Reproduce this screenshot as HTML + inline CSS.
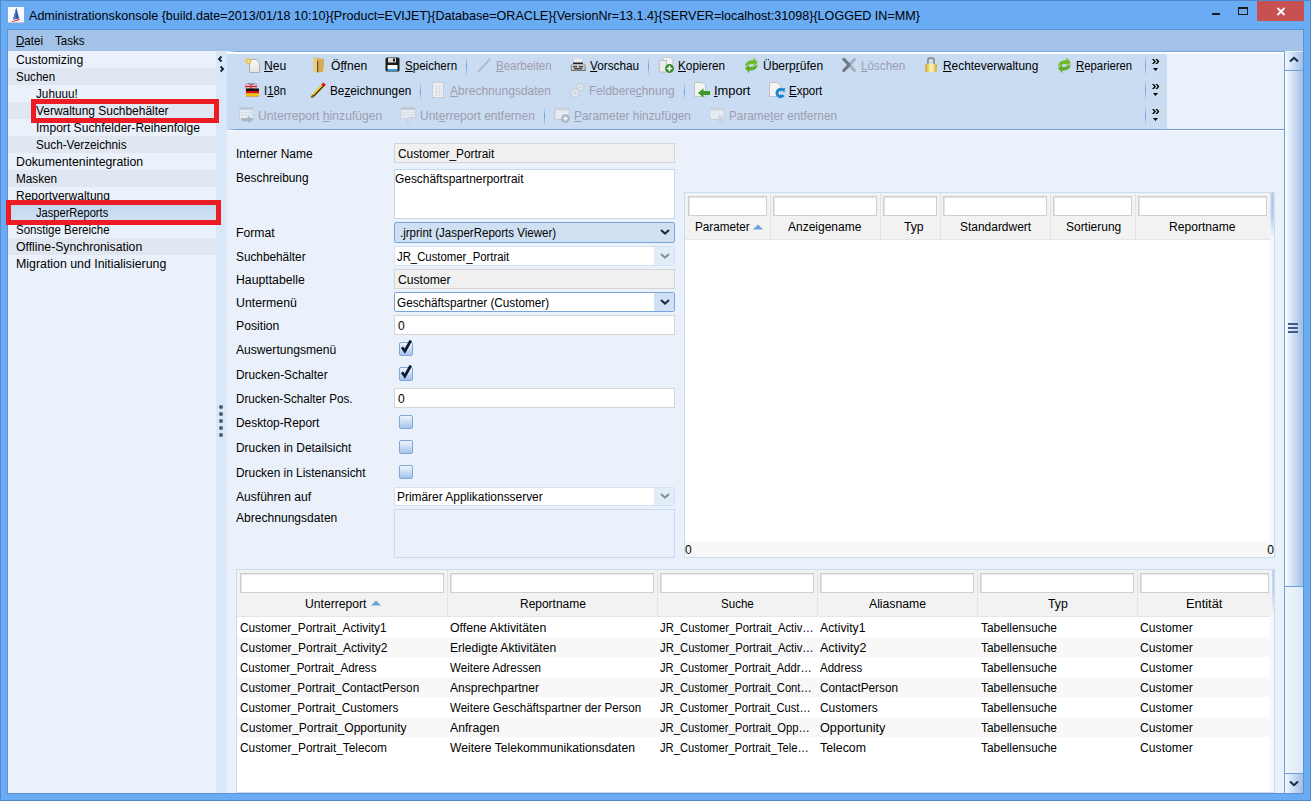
<!DOCTYPE html>
<html><head><meta charset="utf-8">
<style>
*{box-sizing:border-box;margin:0;padding:0}
html,body{width:1311px;height:801px;overflow:hidden}
body{position:relative;background:#6aacf4;font-family:"Liberation Sans",sans-serif;font-size:12px;color:#000}
.a{position:absolute}
.t{position:absolute;white-space:nowrap;line-height:14px}
.d{color:#a09cb0}
.u{text-decoration:underline;text-underline-offset:1px;text-decoration-thickness:1px}
svg{position:absolute;overflow:visible}
</style></head><body>
<div class="a" style="left:0px;top:0px;width:1311px;height:801px;border:1px solid #5189cc"></div>
<svg style="left:8px;top:7px" width="16" height="16" viewBox="0 0 16 16">
<rect x="0" y="0" width="16" height="16" fill="#fafafa"/><rect x="0" y="15" width="16" height="1" fill="#c8c8c8"/>
<path d="M8.3 0.5 L11.2 11.5 L5 12.5 Z" fill="#2f58a8"/><path d="M8.3 0.5 L7.3 12.3 L5 12.5 Z" fill="#5a86d0"/><path d="M3.5 14.5 L12.2 11.6 L11.2 13.3 L4.2 15 Z" fill="#d8283e"/></svg>
<div class="t" style="left:29px;top:8px;font-size:12.57px;line-height:16px">Administrationskonsole {build.date=2013/01/18 10:10}{Product=EVIJET}{Database=ORACLE}{VersionNr=13.1.4}{SERVER=localhost:31098}{LOGGED IN=MM}</div>
<div class="a" style="left:1212px;top:13px;width:8px;height:2px;background:#1c1c1c"></div>
<div class="a" style="left:1238px;top:7px;width:10px;height:8px;border:1px solid #1c1c1c;border-top-width:2px"></div>
<div class="a" style="left:1257px;top:1px;width:47px;height:20px;background:#c75050"></div>
<svg style="left:1276px;top:7px" width="10" height="9" viewBox="0 0 10 9"><path d="M1.5 1 L8.5 8 M8.5 1 L1.5 8" stroke="#fff" stroke-width="1.8"/></svg>
<div class="a" style="left:7px;top:29px;width:1297px;height:765px;background:#5a92d4"></div>
<div class="a" style="left:8px;top:30px;width:1295px;height:21px;background:#a2c3e7"></div>
<div class="t" style="left:16px;top:34px;transform:scaleX(0.9616);transform-origin:0 0;"><span class="u">D</span>atei</div>
<div class="t" style="left:55px;top:34px;transform:scaleX(0.9597);transform-origin:0 0;">Tasks</div>
<div class="a" style="left:8px;top:51px;width:208px;height:742px;background:#eaf1fa"></div>
<div class="t" style="left:16px;top:53px;transform:scaleX(1.0180);transform-origin:0 0;">Customizing</div>
<div class="a" style="left:8px;top:68px;width:208px;height:17px;background:#e0e7f0"></div>
<div class="t" style="left:16px;top:70px;transform:scaleX(0.9619);transform-origin:0 0;">Suchen</div>
<div class="t" style="left:36px;top:87px;transform:scaleX(0.9782);transform-origin:0 0;">Juhuuu!</div>
<div class="a" style="left:8px;top:102px;width:208px;height:17px;background:#e0e7f0"></div>
<div class="t" style="left:36px;top:104px;transform:scaleX(0.9937);transform-origin:0 0;">Verwaltung Suchbehälter</div>
<div class="t" style="left:36px;top:121px;transform:scaleX(1.0070);transform-origin:0 0;">Import Suchfelder-Reihenfolge</div>
<div class="a" style="left:8px;top:136px;width:208px;height:17px;background:#e0e7f0"></div>
<div class="t" style="left:36px;top:138px;transform:scaleX(0.9768);transform-origin:0 0;">Such-Verzeichnis</div>
<div class="t" style="left:16px;top:155px;transform:scaleX(1.0246);transform-origin:0 0;">Dokumentenintegration</div>
<div class="a" style="left:8px;top:170px;width:208px;height:17px;background:#e0e7f0"></div>
<div class="t" style="left:16px;top:172px;transform:scaleX(0.9796);transform-origin:0 0;">Masken</div>
<div class="t" style="left:16px;top:189px;transform:scaleX(0.9983);transform-origin:0 0;">Reportverwaltung</div>
<div class="a" style="left:8px;top:204px;width:208px;height:17px;background:linear-gradient(#c3d7ee,#cfe0f3)"></div>
<div class="t" style="left:36px;top:206px;transform:scaleX(0.9252);transform-origin:0 0;">JasperReports</div>
<div class="t" style="left:16px;top:223px;transform:scaleX(0.9604);transform-origin:0 0;">Sonstige Bereiche</div>
<div class="a" style="left:8px;top:238px;width:208px;height:17px;background:#e0e7f0"></div>
<div class="t" style="left:16px;top:240px;transform:scaleX(1.0192);transform-origin:0 0;">Offline-Synchronisation</div>
<div class="t" style="left:16px;top:257px;transform:scaleX(1.0290);transform-origin:0 0;">Migration und Initialisierung</div>
<div class="a" style="left:216px;top:51px;width:11px;height:742px;background:#d9e7f7"></div>
<svg style="left:216px;top:51px" width="11" height="30" viewBox="0 0 11 30"><path d="M5.5 5.5 L3 8 L5.5 10.5 M4.6 15.5 L7.1 18 L4.6 20.5" stroke="#10203a" stroke-width="1.8" fill="none"/></svg>
<div class="a" style="left:219px;top:405px;width:4px;height:4px;border-radius:2px;background:#4b5a70"></div>
<div class="a" style="left:219px;top:412px;width:4px;height:4px;border-radius:2px;background:#4b5a70"></div>
<div class="a" style="left:219px;top:419px;width:4px;height:4px;border-radius:2px;background:#4b5a70"></div>
<div class="a" style="left:219px;top:426px;width:4px;height:4px;border-radius:2px;background:#4b5a70"></div>
<div class="a" style="left:219px;top:433px;width:4px;height:4px;border-radius:2px;background:#4b5a70"></div>
<div class="a" style="left:227px;top:51px;width:1057px;height:742px;background:#eaf1fa"></div>
<div class="a" style="left:1284px;top:51px;width:19px;height:742px;background:linear-gradient(90deg,#f0f5fc,#dde8f6);border-left:1px solid #6e9fd8"></div>
<div class="a" style="left:1285px;top:52px;width:18px;height:18px;background:linear-gradient(90deg,#f4f8fd,#9fbfe8)"></div>
<div class="a" style="left:1285px;top:70px;width:18px;height:1px;background:#6e9fd8"></div>
<svg style="left:1289px;top:56px" width="10" height="7" viewBox="0 0 10 7"><path d="M1 5.5 L5 1.8 L9 5.5" stroke="#1a2a44" stroke-width="2" fill="none"/></svg>
<div class="a" style="left:1285px;top:71px;width:18px;height:516px;background:linear-gradient(90deg,#fbfdff,#c8daf1 55%,#9ebfe6)"></div>
<div class="a" style="left:1285px;top:586px;width:18px;height:1px;background:#6e9fd8"></div>
<div class="a" style="left:1288px;top:323px;width:10px;height:2px;background:#3e5f8c"></div>
<div class="a" style="left:1288px;top:327px;width:10px;height:2px;background:#3e5f8c"></div>
<div class="a" style="left:1288px;top:331px;width:10px;height:2px;background:#3e5f8c"></div>
<div class="a" style="left:1285px;top:773px;width:18px;height:1px;background:#6e9fd8"></div>
<div class="a" style="left:1285px;top:774px;width:18px;height:19px;background:linear-gradient(90deg,#f4f8fd,#9fbfe8)"></div>
<svg style="left:1289px;top:780px" width="10" height="7" viewBox="0 0 10 7"><path d="M1 1.5 L5 5.2 L9 1.5" stroke="#1a2a44" stroke-width="2" fill="none"/></svg>
<div class="a" style="left:227px;top:51px;width:1057px;height:1px;background:linear-gradient(90deg,rgba(122,167,220,0),#78a6dc 10px)"></div>
<div class="a" style="left:227px;top:52px;width:1057px;height:2px;background:linear-gradient(#ffffff,#f4f8fd)"></div>
<div class="a" style="left:227px;top:54px;width:940px;height:75px;background:#c9dcf2"></div>
<div class="a" style="left:227px;top:129px;width:1057px;height:1px;background:linear-gradient(90deg,#c9dcf2,#6f9fdb 8px)"></div>
<div class="a" style="left:227px;top:130px;width:1057px;height:1px;background:#fafcff"></div>
<svg style="left:244px;top:57px" width="16" height="16" viewBox="0 0 16 16"><defs><linearGradient id="gpg" x1="0" y1="0" x2="0" y2="1"><stop offset="0" stop-color="#fbfbfb"/><stop offset="1" stop-color="#e2e2e2"/></linearGradient><radialGradient id="gsun"><stop offset="0" stop-color="#fff2b8"/><stop offset="1" stop-color="#ddb443"/></radialGradient></defs><path d="M5.5 2.5 H13 L15.5 5 V15.5 H5.5 Z" fill="url(#gpg)" stroke="#b0b0b0" stroke-width="1"/><path d="M13 2.5 V5 H15.5" fill="#e0e0e0" stroke="#c4c4c4" stroke-width="0.8"/><path d="M4.4 0 V8.5 M0.2 4.25 H8.6 M1.4 1.3 L7.4 7.2 M7.4 1.3 L1.4 7.2" stroke="#e9d27a" stroke-width="0.9"/><circle cx="4.4" cy="4.25" r="2.7" fill="url(#gsun)"/></svg>
<div class="t" style="left:264px;top:59px;transform:scaleX(1.0081);transform-origin:0 0;"><span class="u">N</span>eu</div>
<svg style="left:311px;top:57px" width="16" height="16" viewBox="0 0 16 16"><path d="M2 0.5 L13 1.8 V15 L6 15.6 L2 14 Z" fill="#d5ae58"/><path d="M2 0.5 L6 2 V15.8 L2 14 Z" fill="#e7cb8c"/><rect x="6" y="4" width="1.3" height="11.2" fill="#6e5224"/><rect x="12" y="10.5" width="1.6" height="4.5" fill="#ecd59c"/></svg>
<div class="t" style="left:331px;top:59px;transform:scaleX(1.0079);transform-origin:0 0;">Ö<span class="u">f</span>fnen</div>
<svg style="left:385px;top:57px" width="16" height="16" viewBox="0 0 16 16"><rect x="0.5" y="0.5" width="14" height="14" rx="1.5" fill="#1a1a1a"/><rect x="3" y="1" width="8" height="4.5" fill="#d8d8d8"/><rect x="8" y="1.5" width="2" height="3" fill="#1a1a1a"/><rect x="2.5" y="8" width="10" height="4" fill="#fafafa"/><rect x="2.5" y="12" width="10" height="2" fill="#3d9ad8"/></svg>
<div class="t" style="left:405px;top:59px;transform:scaleX(0.9632);transform-origin:0 0;"><span class="u">S</span>peichern</div>
<div class="a" style="left:466px;top:57px;width:1px;height:19px;background:linear-gradient(rgba(111,159,219,0),#6f9fdb 50%,rgba(111,159,219,0))"></div>
<svg style="left:476px;top:57px" width="16" height="16" viewBox="0 0 16 16"><path d="M2 15 L14 2" stroke="#9aa2ac" stroke-width="1.6"/><path d="M2 15 L14 2" stroke="#d8dde3" stroke-width="0.6"/></svg>
<div class="t d" style="left:496px;top:59px;transform:scaleX(0.9585);transform-origin:0 0;"><span class="u">B</span>earbeiten</div>
<svg style="left:570px;top:57px" width="16" height="16" viewBox="0 0 16 16"><rect x="4" y="1.8" width="7.8" height="4" fill="#efefef"/><rect x="3" y="5.5" width="10" height="2.5" fill="#222"/><rect x="0.5" y="7" width="15.5" height="7" rx="2" fill="#9d9d9d"/><rect x="2" y="7.5" width="12.5" height="5.5" rx="1" fill="#c9c9c9"/><rect x="3" y="9.2" width="4" height="1.1" fill="#1e1e1e"/><rect x="9" y="9.2" width="4" height="1.1" fill="#1e1e1e"/><rect x="4" y="11.2" width="8" height="1.1" fill="#1e1e1e"/><rect x="1" y="13" width="15" height="1" fill="#707070"/></svg>
<div class="t" style="left:590px;top:59px;transform:scaleX(0.9827);transform-origin:0 0;"><span class="u">V</span>orschau</div>
<div class="a" style="left:648px;top:57px;width:1px;height:19px;background:linear-gradient(rgba(111,159,219,0),#6f9fdb 50%,rgba(111,159,219,0))"></div>
<svg style="left:658px;top:57px" width="16" height="16" viewBox="0 0 16 16"><path d="M5.5 0.5 H12.5 L14.5 2.5 V12 H5.5 Z" fill="#f2f2f2" stroke="#c8c8c8" stroke-width="0.9"/><path d="M1.3 3.5 H8.5 V15 H1.3 Z" fill="#ececec" stroke="#b8b8b8" stroke-width="0.9"/><circle cx="11.5" cy="11.5" r="4.4" fill="#2e8a22"/><path d="M11.5 8.8 V14.2 M8.8 11.5 H14.2" stroke="#fff" stroke-width="1.7"/></svg>
<div class="t" style="left:678px;top:59px;transform:scaleX(0.9819);transform-origin:0 0;"><span class="u">K</span>opieren</div>
<svg style="left:743px;top:57px" width="16" height="16" viewBox="0 0 16 16"><path d="M2 9.6 C2.5 5 5.5 3.2 10.3 3.2 L10.5 0.5 L14.8 5.5 L10.8 9.2 L10.6 6.9 C7 6.9 4.5 7.6 2 9.6 Z" fill="#74b92a"/><path d="M2 9.6 C2.5 5 5.5 3.2 10.3 3.2 L10.5 0.5 L14.8 5.5 L10.8 9.2 L10.6 6.9 C7 6.9 4.5 7.6 2 9.6 Z" fill="#62ae28" transform="rotate(180 8.4 8.4)"/></svg>
<div class="t" style="left:763px;top:59px;transform:scaleX(1.0009);transform-origin:0 0;">Überp<span class="u">r</span>üfen</div>
<svg style="left:841px;top:57px" width="16" height="16" viewBox="0 0 16 16"><path d="M2.8 2.3 L13.5 13.5" stroke="#a7b0ba" stroke-width="3" stroke-linecap="round"/><path d="M13.5 2.5 L2.8 13.5" stroke="#a7b0ba" stroke-width="3" stroke-linecap="round"/><path d="M2.8 2.3 L8 7.8 M8 8 L2.8 13.5" stroke="#6f7984" stroke-width="3" stroke-linecap="round"/></svg>
<div class="t d" style="left:861px;top:59px;transform:scaleX(0.9731);transform-origin:0 0;"><span class="u">L</span>öschen</div>
<svg style="left:923px;top:57px" width="16" height="16" viewBox="0 0 16 16"><defs><linearGradient id="glk" x1="0" y1="0" x2="1" y2="0"><stop offset="0" stop-color="#d2a526"/><stop offset="0.45" stop-color="#fbf0a8"/><stop offset="0.7" stop-color="#f6e79a"/><stop offset="1" stop-color="#d0a22a"/></linearGradient></defs><path d="M4.9 7 V3.3 Q4.9 1.2 7 1.2 H9 Q11.1 1.2 11.1 3.3 V7" stroke="#8a8a8a" stroke-width="1.7" fill="none"/><rect x="2.3" y="6.8" width="11.4" height="8.2" rx="1" fill="url(#glk)"/></svg>
<div class="t" style="left:943px;top:59px;transform:scaleX(0.9920);transform-origin:0 0;"><span class="u">R</span>echteverwaltung</div>
<svg style="left:1056px;top:57px" width="16" height="16" viewBox="0 0 16 16"><path d="M2 9.6 C2.5 5 5.5 3.2 10.3 3.2 L10.5 0.5 L14.8 5.5 L10.8 9.2 L10.6 6.9 C7 6.9 4.5 7.6 2 9.6 Z" fill="#74b92a"/><path d="M2 9.6 C2.5 5 5.5 3.2 10.3 3.2 L10.5 0.5 L14.8 5.5 L10.8 9.2 L10.6 6.9 C7 6.9 4.5 7.6 2 9.6 Z" fill="#62ae28" transform="rotate(180 8.4 8.4)"/></svg>
<div class="t" style="left:1076px;top:59px;transform:scaleX(0.9454);transform-origin:0 0;"><span class="u">R</span>eparieren</div>
<svg style="left:244px;top:82px" width="16" height="16" viewBox="0 0 16 16"><rect x="1" y="1.5" width="12" height="6" fill="#2f4a9a"/><path d="M1 1.5 L13 7.5 M13 1.5 L1 7.5" stroke="#fff" stroke-width="1.5"/><path d="M1 1.5 L13 7.5 M13 1.5 L1 7.5" stroke="#d03040" stroke-width="0.5"/><path d="M7 1.5 V7.5 M1 4.5 H13" stroke="#fff" stroke-width="2.4"/><path d="M7 1.5 V7.5 M1 4.5 H13" stroke="#d02030" stroke-width="1.3"/><rect x="2" y="6.5" width="13" height="2.5" fill="#111"/><rect x="2" y="9" width="13" height="2.5" fill="#dd1010"/><rect x="2" y="11.5" width="13" height="2.5" fill="#f4c400"/><rect x="2" y="14" width="13" height="0.8" fill="#c89850"/></svg>
<div class="t" style="left:264px;top:84px;transform:scaleX(0.9463);transform-origin:0 0;">I<span class="u">1</span>8n</div>
<svg style="left:310px;top:82px" width="16" height="16" viewBox="0 0 16 16"><path d="M2.6 14.2 L13.2 3.2" stroke="#f0c630" stroke-width="3.6"/><path d="M3.2 14.6 L13.6 3.8" stroke="#111" stroke-width="1.1"/><path d="M12.6 3.8 L14.6 1.6" stroke="#d81818" stroke-width="3.6"/><path d="M1.4 15.6 L3.4 13.4" stroke="#6e6048" stroke-width="2.2"/></svg>
<div class="t" style="left:330px;top:84px;transform:scaleX(0.9822);transform-origin:0 0;">Be<span class="u">z</span>eichnungen</div>
<div class="a" style="left:420px;top:82px;width:1px;height:19px;background:linear-gradient(rgba(111,159,219,0),#6f9fdb 50%,rgba(111,159,219,0))"></div>
<svg style="left:431px;top:82px" width="16" height="16" viewBox="0 0 16 16"><rect x="1.5" y="0.5" width="11" height="15" fill="#eef0f4" stroke="#c8ccd4"/><path d="M3 4 H11 M3 7 H11 M3 10 H11 M3 13 H11 M5.5 4 V14 M8.5 4 V14" stroke="#d4d8de" stroke-width="0.8"/></svg>
<div class="t d" style="left:450px;top:84px;transform:scaleX(1.0024);transform-origin:0 0;"><span class="u">A</span>brechnungsdaten</div>
<svg style="left:569px;top:82px" width="16" height="16" viewBox="0 0 16 16"><g fill="#e4e9ef" stroke="#b9c1ca" stroke-width="0.8"><path d="M11 0.8 L12 1.8 L13.5 1.5 L13.8 3 L15.2 3.8 L14.6 5.2 L15.2 6.6 L13.8 7.2 L13.4 8.7 L12 8.3 L10.8 9.2 L9.9 8 L8.4 7.8 L8.6 6.3 L7.6 5.1 L8.7 4.1 L8.6 2.6 L10.1 2.3 Z"/><path d="M5.5 5.6 L6.8 7 L8.6 6.7 L8.9 8.6 L10.5 9.6 L9.6 11.2 L10.3 12.9 L8.6 13.6 L8 15.4 L6.3 14.8 L4.8 15.8 L3.8 14.3 L2 14 L2.3 12.2 L1.2 10.8 L2.6 9.6 L2.5 7.8 L4.3 7.4 Z"/></g><circle cx="11.5" cy="5" r="1.6" fill="#cfd6de"/><circle cx="5.8" cy="10.8" r="2" fill="#cfd6de"/></svg>
<div class="t d" style="left:589px;top:84px;transform:scaleX(0.9877);transform-origin:0 0;">Feldbere<span class="u">c</span>hnung</div>
<div class="a" style="left:684px;top:82px;width:1px;height:19px;background:linear-gradient(rgba(111,159,219,0),#6f9fdb 50%,rgba(111,159,219,0))"></div>
<svg style="left:694px;top:82px" width="16" height="16" viewBox="0 0 16 16"><path d="M0.5 0.5 H8.5 L11.5 3.5 V14.5 H0.5 Z" fill="#f3f3f3" stroke="#bdbdbd" stroke-width="0.9"/><path d="M4 11 L9.5 6.3 V9 H16 V13 H9.5 V15.6 Z" fill="#3e9a26"/></svg>
<div class="t" style="left:714px;top:84px;transform:scaleX(1.0691);transform-origin:0 0;"><span class="u">I</span>mport</div>
<svg style="left:769px;top:82px" width="16" height="16" viewBox="0 0 16 16"><path d="M0.5 0.5 H8.5 L11.5 3.5 V14.5 H0.5 Z" fill="#f3f3f3" stroke="#bdbdbd" stroke-width="0.9"/><path d="M14.5 13.2 A3.6 3.6 0 1 1 13.5 8" stroke="#1a86d2" stroke-width="3" fill="none"/><path d="M11.5 6.8 L16 6 L15.5 10.5 Z" fill="#1a86d2"/></svg>
<div class="t" style="left:789px;top:84px;transform:scaleX(0.9581);transform-origin:0 0;"><span class="u">E</span>xport</div>
<svg style="left:239px;top:107px" width="16" height="16" viewBox="0 0 16 16"><rect x="0.5" y="0.7" width="13.5" height="10.8" fill="#e9eef4" stroke="#c5ced8" stroke-width="0.8"/><rect x="0.5" y="0.5" width="13.5" height="2.2" fill="#b9c5d2"/><path d="M3 2.7 V11 M1 5.5 H14 M1 8 H14 M7 2.7 V11 M10.5 2.7 V11" stroke="#d2dae3" stroke-width="0.7"/><path d="M2.8 11.2 H8.8 V9 L15 12.7 L8.8 16 V14.2 H2.8 Z" fill="#aab6c4"/></svg>
<div class="t d" style="left:258px;top:109px;transform:scaleX(1.0126);transform-origin:0 0;">Unterreport <span class="u">h</span>inzufügen</div>
<svg style="left:400px;top:107px" width="16" height="16" viewBox="0 0 16 16"><rect x="1" y="0.7" width="14" height="10.8" fill="#e9eef4" stroke="#c8d1db" stroke-width="0.8"/><rect x="1" y="0.5" width="14" height="2.2" fill="#bcc7d3"/><path d="M4 2.7 V11 M1.5 5.5 H14.5 M1.5 8 H14.5 M8 2.7 V11 M11.5 2.7 V11" stroke="#d4dce5" stroke-width="0.7"/><path d="M15 10.5 H8 L6 12.5 L10.5 17 L6 15" stroke="#c5d0dc" stroke-width="1" fill="#d2dbe6"/></svg>
<div class="t d" style="left:420px;top:109px;transform:scaleX(1.0012);transform-origin:0 0;">Unt<span class="u">e</span>rreport entfernen</div>
<div class="a" style="left:544px;top:107px;width:1px;height:19px;background:linear-gradient(rgba(111,159,219,0),#6f9fdb 50%,rgba(111,159,219,0))"></div>
<svg style="left:554px;top:107px" width="16" height="16" viewBox="0 0 16 16"><rect x="0.8" y="1.2" width="14.4" height="11.2" rx="0.8" fill="#e6ebf1" stroke="#b9c3ce" stroke-width="0.8"/><rect x="0.8" y="1.2" width="14.4" height="2.2" fill="#cbd3dc"/><circle cx="11.5" cy="11.5" r="4.3" fill="#a9b2bd"/><path d="M11.5 9 V14 M9 11.5 H14" stroke="#f2f6fb" stroke-width="1.5"/></svg>
<div class="t d" style="left:574px;top:109px;transform:scaleX(0.9906);transform-origin:0 0;"><span class="u">P</span>arameter hinzufügen</div>
<svg style="left:709px;top:107px" width="16" height="16" viewBox="0 0 16 16"><rect x="0.8" y="1.2" width="14.4" height="11.2" rx="0.8" fill="#e6ebf1" stroke="#bec8d3" stroke-width="0.8"/><rect x="0.8" y="1.2" width="14.4" height="2.2" fill="#cdd5de"/><path d="M9.5 8.5 L14 15.5 M14 8.5 L9.5 15.5" stroke="#c9d3de" stroke-width="2"/></svg>
<div class="t d" style="left:729px;top:109px;transform:scaleX(0.9808);transform-origin:0 0;">Parame<span class="u">t</span>er entfernen</div>
<div class="a" style="left:1145px;top:55px;width:1px;height:21px;background:linear-gradient(rgba(111,159,219,0),#6f9fdb 50%,rgba(111,159,219,0))"></div>
<svg style="left:1151px;top:59px" width="9" height="13" viewBox="0 0 9 13"><path d="M1 0 H2.8 L5 2.5 L2.8 5 H1 L3.2 2.5 Z M4.4 0 H6.2 L8.4 2.5 L6.2 5 H4.4 L6.6 2.5 Z" fill="#000"/><path d="M2 9 H7 L4.5 12 Z" fill="#000"/></svg>
<div class="a" style="left:1145px;top:80px;width:1px;height:21px;background:linear-gradient(rgba(111,159,219,0),#6f9fdb 50%,rgba(111,159,219,0))"></div>
<svg style="left:1151px;top:84px" width="9" height="13" viewBox="0 0 9 13"><path d="M1 0 H2.8 L5 2.5 L2.8 5 H1 L3.2 2.5 Z M4.4 0 H6.2 L8.4 2.5 L6.2 5 H4.4 L6.6 2.5 Z" fill="#000"/><path d="M2 9 H7 L4.5 12 Z" fill="#000"/></svg>
<div class="a" style="left:1145px;top:105px;width:1px;height:21px;background:linear-gradient(rgba(111,159,219,0),#6f9fdb 50%,rgba(111,159,219,0))"></div>
<svg style="left:1151px;top:109px" width="9" height="13" viewBox="0 0 9 13"><path d="M1 0 H2.8 L5 2.5 L2.8 5 H1 L3.2 2.5 Z M4.4 0 H6.2 L8.4 2.5 L6.2 5 H4.4 L6.6 2.5 Z" fill="#000"/><path d="M2 9 H7 L4.5 12 Z" fill="#000"/></svg>
<div class="t" style="left:236px;top:147px;transform:scaleX(0.9986);transform-origin:0 0;">Interner Name</div>
<div class="t" style="left:236px;top:171px;transform:scaleX(0.9890);transform-origin:0 0;">Beschreibung</div>
<div class="t" style="left:236px;top:226px;transform:scaleX(1.0159);transform-origin:0 0;">Format</div>
<div class="t" style="left:236px;top:250px;transform:scaleX(0.9839);transform-origin:0 0;">Suchbehälter</div>
<div class="t" style="left:236px;top:273px;transform:scaleX(1.0213);transform-origin:0 0;">Haupttabelle</div>
<div class="t" style="left:236px;top:296px;transform:scaleX(1.0245);transform-origin:0 0;">Untermenü</div>
<div class="t" style="left:236px;top:319px;transform:scaleX(1.0168);transform-origin:0 0;">Position</div>
<div class="t" style="left:236px;top:343px;transform:scaleX(1.0093);transform-origin:0 0;">Auswertungsmenü</div>
<div class="t" style="left:236px;top:368px;transform:scaleX(0.9879);transform-origin:0 0;">Drucken-Schalter</div>
<div class="t" style="left:236px;top:392px;transform:scaleX(0.9702);transform-origin:0 0;">Drucken-Schalter Pos.</div>
<div class="t" style="left:236px;top:416px;transform:scaleX(0.9910);transform-origin:0 0;">Desktop-Report</div>
<div class="t" style="left:236px;top:441px;transform:scaleX(0.9935);transform-origin:0 0;">Drucken in Detailsicht</div>
<div class="t" style="left:236px;top:466px;transform:scaleX(0.9905);transform-origin:0 0;">Drucken in Listenansicht</div>
<div class="t" style="left:236px;top:490px;transform:scaleX(1.0052);transform-origin:0 0;">Ausführen auf</div>
<div class="t" style="left:236px;top:511px;transform:scaleX(1.0055);transform-origin:0 0;">Abrechnungsdaten</div>
<div class="a" style="left:394px;top:143px;width:281px;height:20px;background:#f0f0f0;border:1px solid #d5d5d5"></div>
<div class="t" style="left:398px;top:147px;transform:scaleX(0.9888);transform-origin:0 0;">Customer_Portrait</div>
<div class="a" style="left:394px;top:169px;width:281px;height:50px;background:#fff;border:1px solid #c5d9f1"></div>
<div class="t" style="left:395px;top:172px;transform:scaleX(0.9929);transform-origin:0 0;">Geschäftspartnerportrait</div>
<div class="a" style="left:394px;top:222px;width:281px;height:21px;background:#cfe0f3;border:1px solid #7ba5d9;border-radius:2px"></div>
<div class="a" style="left:654px;top:223px;width:20px;height:19px;background:#cfe0f3;border-radius:0 2px 2px 0"></div>
<svg style="left:660px;top:229px" width="10" height="6" viewBox="0 0 10 6"><path d="M1 1 L5 4.6 L9 1" stroke="#1a2a44" stroke-width="2" fill="none"/></svg>
<div class="t" style="left:400px;top:226px;transform:scaleX(0.9609);transform-origin:0 0;">.jrprint (JasperReports Viewer)</div>
<div class="a" style="left:394px;top:246px;width:281px;height:20px;background:#fff;border:1px solid #d3e2f5;border-radius:2px"></div>
<div class="a" style="left:654px;top:247px;width:20px;height:18px;background:#e2ecf8;border-radius:0 2px 2px 0"></div>
<svg style="left:660px;top:253px" width="10" height="6" viewBox="0 0 10 6"><path d="M1 1 L5 4.6 L9 1" stroke="#8a8f96" stroke-width="2" fill="none"/></svg>
<div class="t" style="left:397px;top:250px;transform:scaleX(0.9454);transform-origin:0 0;">JR_Customer_Portrait</div>
<div class="a" style="left:394px;top:269px;width:281px;height:20px;background:#f0f0f0;border:1px solid #d5d5d5"></div>
<div class="t" style="left:398px;top:273px;transform:scaleX(1.0115);transform-origin:0 0;">Customer</div>
<div class="a" style="left:394px;top:292px;width:281px;height:20px;background:#fff;border:1px solid #7ba5d9;border-radius:2px"></div>
<div class="a" style="left:654px;top:293px;width:20px;height:18px;background:#cfe0f3;border-radius:0 2px 2px 0"></div>
<svg style="left:660px;top:299px" width="10" height="6" viewBox="0 0 10 6"><path d="M1 1 L5 4.6 L9 1" stroke="#1a2a44" stroke-width="2" fill="none"/></svg>
<div class="t" style="left:397px;top:296px;transform:scaleX(0.9793);transform-origin:0 0;">Geschäftspartner (Customer)</div>
<div class="a" style="left:394px;top:315px;width:281px;height:20px;background:#fff;border:1px solid #d5d5d5"></div>
<div class="t" style="left:398px;top:319px;">0</div>
<div class="a" style="left:399px;top:342px;width:14px;height:14px;border:1px solid #7fa6da;border-radius:2px;background:linear-gradient(#eef4fc,#d2e2f6 40%,#a6c3eb)"></div>
<svg style="left:399px;top:339px" width="16" height="16" viewBox="0 0 16 16"><path d="M3 8.3 L5.8 12.2 L11.8 1.5" stroke="#0c1830" stroke-width="2.7" fill="none" stroke-linejoin="miter"/></svg>
<div class="a" style="left:399px;top:367px;width:14px;height:14px;border:1px solid #7fa6da;border-radius:2px;background:linear-gradient(#eef4fc,#d2e2f6 40%,#a6c3eb)"></div>
<svg style="left:399px;top:364px" width="16" height="16" viewBox="0 0 16 16"><path d="M3 8.3 L5.8 12.2 L11.8 1.5" stroke="#0c1830" stroke-width="2.7" fill="none" stroke-linejoin="miter"/></svg>
<div class="a" style="left:394px;top:388px;width:281px;height:20px;background:#fff;border:1px solid #d5d5d5"></div>
<div class="t" style="left:398px;top:392px;">0</div>
<div class="a" style="left:399px;top:415px;width:14px;height:14px;border:1px solid #7fa6da;border-radius:2px;background:linear-gradient(#eef4fc,#d2e2f6 40%,#a6c3eb)"></div>
<div class="a" style="left:399px;top:440px;width:14px;height:14px;border:1px solid #7fa6da;border-radius:2px;background:linear-gradient(#eef4fc,#d2e2f6 40%,#a6c3eb)"></div>
<div class="a" style="left:399px;top:465px;width:14px;height:14px;border:1px solid #7fa6da;border-radius:2px;background:linear-gradient(#eef4fc,#d2e2f6 40%,#a6c3eb)"></div>
<div class="a" style="left:394px;top:487px;width:281px;height:19px;background:#fff;border:1px solid #d3e2f5;border-radius:2px"></div>
<div class="a" style="left:654px;top:488px;width:20px;height:17px;background:#e2ecf8;border-radius:0 2px 2px 0"></div>
<svg style="left:660px;top:493px" width="10" height="6" viewBox="0 0 10 6"><path d="M1 1 L5 4.6 L9 1" stroke="#8a8f96" stroke-width="2" fill="none"/></svg>
<div class="t" style="left:397px;top:490px;transform:scaleX(0.9930);transform-origin:0 0;">Primärer Applikationsserver</div>
<div class="a" style="left:394px;top:509px;width:281px;height:49px;background:#eaf1fa;border:1px solid #cadcf1"></div>
<div class="a" style="left:684px;top:192px;width:591px;height:366px;background:#fff;border:1px solid #c9dcf1"></div>
<div class="a" style="left:685px;top:193px;width:585px;height:46px;background:#f2f2f2"></div>
<div class="a" style="left:1270px;top:193px;width:4px;height:46px;background:linear-gradient(rgba(244,248,252,0) 45%,#f4f8fc),linear-gradient(90deg,#dfe9f6,#a3c1e8 60%,#d6e4f5)"></div>
<div class="a" style="left:1270px;top:239px;width:4px;height:318px;background:#f4f8fc"></div>
<div class="a" style="left:688px;top:196px;width:79px;height:20px;background:#fff;border:1px solid #cfcfcf;box-shadow:inset 1px 1px 0 #e4e4e4"></div>
<div class="a" style="left:770px;top:193px;width:1px;height:46px;background:#e3e3e3"></div>
<div class="a" style="left:773px;top:196px;width:104px;height:20px;background:#fff;border:1px solid #cfcfcf;box-shadow:inset 1px 1px 0 #e4e4e4"></div>
<div class="a" style="left:880px;top:193px;width:1px;height:46px;background:#e3e3e3"></div>
<div class="a" style="left:883px;top:196px;width:54px;height:20px;background:#fff;border:1px solid #cfcfcf;box-shadow:inset 1px 1px 0 #e4e4e4"></div>
<div class="a" style="left:940px;top:193px;width:1px;height:46px;background:#e3e3e3"></div>
<div class="a" style="left:943px;top:196px;width:104px;height:20px;background:#fff;border:1px solid #cfcfcf;box-shadow:inset 1px 1px 0 #e4e4e4"></div>
<div class="a" style="left:1050px;top:193px;width:1px;height:46px;background:#e3e3e3"></div>
<div class="a" style="left:1053px;top:196px;width:79px;height:20px;background:#fff;border:1px solid #cfcfcf;box-shadow:inset 1px 1px 0 #e4e4e4"></div>
<div class="a" style="left:1135px;top:193px;width:1px;height:46px;background:#e3e3e3"></div>
<div class="a" style="left:1138px;top:196px;width:129px;height:20px;background:#fff;border:1px solid #cfcfcf;box-shadow:inset 1px 1px 0 #e4e4e4"></div>
<div class="t" style="left:695px;top:220px;transform:scaleX(0.9775);transform-origin:0 0;">Parameter</div>
<div class="t" style="left:788px;top:220px;transform:scaleX(1.0001);transform-origin:0 0;">Anzeigename</div>
<div class="t" style="left:904px;top:220px;transform:scaleX(1.0141);transform-origin:0 0;">Typ</div>
<div class="t" style="left:960px;top:220px;transform:scaleX(0.9961);transform-origin:0 0;">Standardwert</div>
<div class="t" style="left:1066px;top:220px;transform:scaleX(0.9968);transform-origin:0 0;">Sortierung</div>
<div class="t" style="left:1169px;top:220px;transform:scaleX(1.0070);transform-origin:0 0;">Reportname</div>
<div class="a" style="left:685px;top:239px;width:585px;height:1px;background:#e6e6e6"></div>
<svg style="left:753px;top:224px" width="10" height="6" viewBox="0 0 10 6"><path d="M0 5.5 L5 0.5 L10 5.5 Z" fill="#6f9fdc"/></svg>
<div class="a" style="left:685px;top:541px;width:585px;height:16px;background:#f8f8f8"></div>
<div class="t" style="left:685px;top:543px;">0</div>
<div class="t" style="left:1200px;top:543px;width:74px;text-align:right">0</div>
<div class="a" style="left:236px;top:569px;width:1039px;height:224px;background:#fff;border:1px solid #c9dcf1"></div>
<div class="a" style="left:237px;top:570px;width:1035px;height:46px;background:#f2f2f2"></div>
<div class="a" style="left:1272px;top:570px;width:2px;height:46px;background:linear-gradient(rgba(244,248,252,0) 45%,#f4f8fc),linear-gradient(90deg,#dfe9f6,#a3c1e8 60%,#d6e4f5)"></div>
<div class="a" style="left:1270px;top:616px;width:4px;height:176px;background:#f4f8fc"></div>
<div class="a" style="left:240px;top:573px;width:204px;height:20px;background:#fff;border:1px solid #cfcfcf;box-shadow:inset 1px 1px 0 #e4e4e4"></div>
<div class="a" style="left:447px;top:570px;width:1px;height:46px;background:#e3e3e3"></div>
<div class="a" style="left:450px;top:573px;width:204px;height:20px;background:#fff;border:1px solid #cfcfcf;box-shadow:inset 1px 1px 0 #e4e4e4"></div>
<div class="a" style="left:657px;top:570px;width:1px;height:46px;background:#e3e3e3"></div>
<div class="a" style="left:660px;top:573px;width:154px;height:20px;background:#fff;border:1px solid #cfcfcf;box-shadow:inset 1px 1px 0 #e4e4e4"></div>
<div class="a" style="left:817px;top:570px;width:1px;height:46px;background:#e3e3e3"></div>
<div class="a" style="left:820px;top:573px;width:154px;height:20px;background:#fff;border:1px solid #cfcfcf;box-shadow:inset 1px 1px 0 #e4e4e4"></div>
<div class="a" style="left:977px;top:570px;width:1px;height:46px;background:#e3e3e3"></div>
<div class="a" style="left:980px;top:573px;width:154px;height:20px;background:#fff;border:1px solid #cfcfcf;box-shadow:inset 1px 1px 0 #e4e4e4"></div>
<div class="a" style="left:1137px;top:570px;width:1px;height:46px;background:#e3e3e3"></div>
<div class="a" style="left:1140px;top:573px;width:129px;height:20px;background:#fff;border:1px solid #cfcfcf;box-shadow:inset 1px 1px 0 #e4e4e4"></div>
<div class="t" style="left:305px;top:597px;transform:scaleX(1.0117);transform-origin:0 0;">Unterreport</div>
<div class="t" style="left:520px;top:597px;transform:scaleX(0.9962);transform-origin:0 0;">Reportname</div>
<div class="t" style="left:721px;top:597px;transform:scaleX(0.9625);transform-origin:0 0;">Suche</div>
<div class="t" style="left:869px;top:597px;transform:scaleX(1.0177);transform-origin:0 0;">Aliasname</div>
<div class="t" style="left:1048px;top:597px;transform:scaleX(1.0196);transform-origin:0 0;">Typ</div>
<div class="t" style="left:1186px;top:597px;transform:scaleX(1.0691);transform-origin:0 0;">Entität</div>
<div class="a" style="left:237px;top:616px;width:1033px;height:1px;background:#e6e6e6"></div>
<svg style="left:371px;top:600px" width="10" height="6" viewBox="0 0 10 6"><path d="M0 5.5 L5 0.5 L10 5.5 Z" fill="#6f9fdc"/></svg>
<div class="t" style="left:240px;top:621px;transform:scaleX(0.9856);transform-origin:0 0;">Customer_Portrait_Activity1</div>
<div class="t" style="left:450px;top:621px;transform:scaleX(1.0254);transform-origin:0 0;">Offene Aktivitäten</div>
<div class="t" style="left:660px;top:621px;transform:scaleX(0.9403);transform-origin:0 0;">JR_Customer_Portrait_Activ…</div>
<div class="t" style="left:820px;top:621px;transform:scaleX(1.0187);transform-origin:0 0;">Activity1</div>
<div class="t" style="left:981px;top:621px;transform:scaleX(0.9890);transform-origin:0 0;">Tabellensuche</div>
<div class="t" style="left:1140px;top:621px;transform:scaleX(1.0135);transform-origin:0 0;">Customer</div>
<div class="a" style="left:237px;top:637px;width:1033px;height:20px;background:#f8f8f8"></div>
<div class="t" style="left:240px;top:641px;transform:scaleX(0.9904);transform-origin:0 0;">Customer_Portrait_Activity2</div>
<div class="t" style="left:450px;top:641px;transform:scaleX(1.0067);transform-origin:0 0;">Erledigte Aktivitäten</div>
<div class="t" style="left:660px;top:641px;transform:scaleX(0.9403);transform-origin:0 0;">JR_Customer_Portrait_Activ…</div>
<div class="t" style="left:820px;top:641px;transform:scaleX(1.0394);transform-origin:0 0;">Activity2</div>
<div class="t" style="left:981px;top:641px;transform:scaleX(0.9890);transform-origin:0 0;">Tabellensuche</div>
<div class="t" style="left:1140px;top:641px;transform:scaleX(1.0135);transform-origin:0 0;">Customer</div>
<div class="t" style="left:240px;top:661px;transform:scaleX(0.9651);transform-origin:0 0;">Customer_Portrait_Adress</div>
<div class="t" style="left:450px;top:661px;transform:scaleX(0.9636);transform-origin:0 0;">Weitere Adressen</div>
<div class="t" style="left:660px;top:661px;transform:scaleX(0.9317);transform-origin:0 0;">JR_Customer_Portrait_Addr…</div>
<div class="t" style="left:820px;top:661px;transform:scaleX(0.9619);transform-origin:0 0;">Address</div>
<div class="t" style="left:981px;top:661px;transform:scaleX(0.9890);transform-origin:0 0;">Tabellensuche</div>
<div class="t" style="left:1140px;top:661px;transform:scaleX(1.0135);transform-origin:0 0;">Customer</div>
<div class="a" style="left:237px;top:677px;width:1033px;height:20px;background:#f8f8f8"></div>
<div class="t" style="left:240px;top:681px;transform:scaleX(0.9768);transform-origin:0 0;">Customer_Portrait_ContactPerson</div>
<div class="t" style="left:450px;top:681px;transform:scaleX(1.0021);transform-origin:0 0;">Ansprechpartner</div>
<div class="t" style="left:660px;top:681px;transform:scaleX(0.9317);transform-origin:0 0;">JR_Customer_Portrait_Cont…</div>
<div class="t" style="left:820px;top:681px;transform:scaleX(0.9835);transform-origin:0 0;">ContactPerson</div>
<div class="t" style="left:981px;top:681px;transform:scaleX(0.9890);transform-origin:0 0;">Tabellensuche</div>
<div class="t" style="left:1140px;top:681px;transform:scaleX(1.0135);transform-origin:0 0;">Customer</div>
<div class="t" style="left:240px;top:701px;transform:scaleX(0.9772);transform-origin:0 0;">Customer_Portrait_Customers</div>
<div class="t" style="left:450px;top:701px;transform:scaleX(0.9628);transform-origin:0 0;">Weitere Geschäftspartner der Person</div>
<div class="t" style="left:660px;top:701px;transform:scaleX(0.9294);transform-origin:0 0;">JR_Customer_Portrait_Cust…</div>
<div class="t" style="left:820px;top:701px;transform:scaleX(0.9927);transform-origin:0 0;">Customers</div>
<div class="t" style="left:981px;top:701px;transform:scaleX(0.9890);transform-origin:0 0;">Tabellensuche</div>
<div class="t" style="left:1140px;top:701px;transform:scaleX(1.0135);transform-origin:0 0;">Customer</div>
<div class="a" style="left:237px;top:717px;width:1033px;height:20px;background:#f8f8f8"></div>
<div class="t" style="left:240px;top:721px;transform:scaleX(1.0026);transform-origin:0 0;">Customer_Portrait_Opportunity</div>
<div class="t" style="left:450px;top:721px;transform:scaleX(1.0168);transform-origin:0 0;">Anfragen</div>
<div class="t" style="left:660px;top:721px;transform:scaleX(0.9348);transform-origin:0 0;">JR_Customer_Portrait_Opp…</div>
<div class="t" style="left:820px;top:721px;transform:scaleX(1.0551);transform-origin:0 0;">Opportunity</div>
<div class="t" style="left:981px;top:721px;transform:scaleX(0.9890);transform-origin:0 0;">Tabellensuche</div>
<div class="t" style="left:1140px;top:721px;transform:scaleX(1.0135);transform-origin:0 0;">Customer</div>
<div class="t" style="left:240px;top:741px;transform:scaleX(0.9882);transform-origin:0 0;">Customer_Portrait_Telecom</div>
<div class="t" style="left:450px;top:741px;transform:scaleX(1.0105);transform-origin:0 0;">Weitere Telekommunikationsdaten</div>
<div class="t" style="left:660px;top:741px;transform:scaleX(0.9323);transform-origin:0 0;">JR_Customer_Portrait_Tele…</div>
<div class="t" style="left:820px;top:741px;transform:scaleX(1.0302);transform-origin:0 0;">Telecom</div>
<div class="t" style="left:981px;top:741px;transform:scaleX(0.9890);transform-origin:0 0;">Tabellensuche</div>
<div class="t" style="left:1140px;top:741px;transform:scaleX(1.0135);transform-origin:0 0;">Customer</div>
<div class="a" style="left:31px;top:99px;width:188px;height:24px;border:5px solid #ed1c24"></div>
<div class="a" style="left:6px;top:200px;width:215px;height:25px;border:5px solid #ed1c24"></div>
</body></html>
